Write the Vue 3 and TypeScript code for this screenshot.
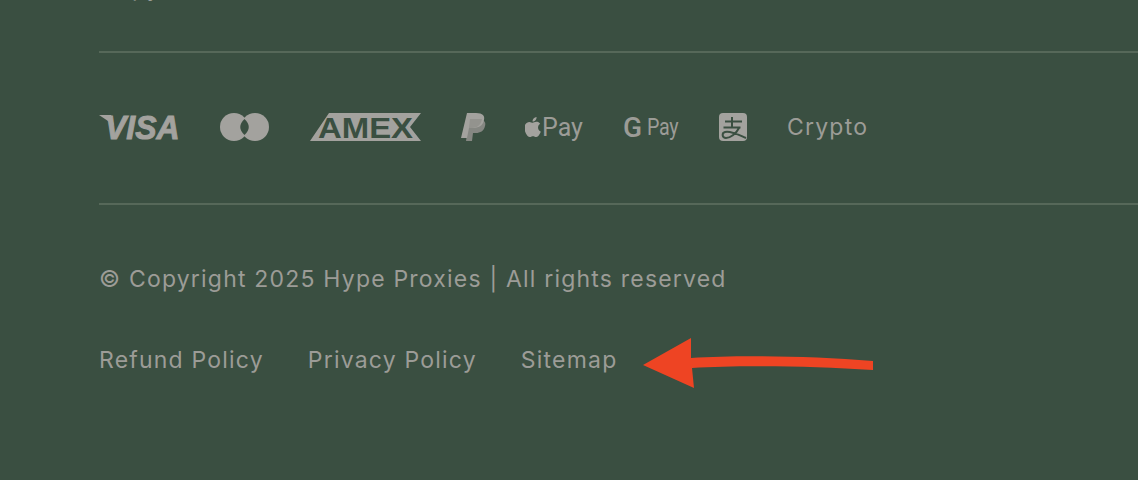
<script setup lang="ts">
const links: string[] = ['Refund Policy', 'Privacy Policy', 'Sitemap']
</script>

<template>
  <footer class="footer">
    <div class="clipped"><span>Copy</span></div>
    <hr class="rule first" />
    <div class="pay">
      <svg class="visa" width="86" height="44" viewBox="0 0 86 44">
        <path class="m" d="M0 10h12l3 10z" />
        <text class="visa-text" x="6" y="34" textLength="74.500" lengthAdjust="spacingAndGlyphs">VISA</text>
      </svg>
      <svg width="49" height="28" viewBox="0 0 49 28">
        <circle class="m" cx="14" cy="14" r="14" />
        <circle class="m" cx="35" cy="14" r="14" />
        <path class="bgfill" d="M24.500 6Q16 14 24.500 22Q33 14 24.500 6z" />
      </svg>
      <svg class="amex" width="111" height="44" viewBox="0 0 111 44">
        <path class="m" d="M19 8h92l-11 14 11 14H0z" />
        <text class="amex-text" x="8" y="32.500" textLength="95" lengthAdjust="spacingAndGlyphs">AMEX</text>
      </svg>
      <svg width="25" height="28" viewBox="0 0 25 28">
        <path class="m2" d="M8 7h11c5 0 6 3 5 6-1 5-5 7-9 7h-3l-1 8H5z" />
        <path class="m" d="M6 0h9c7 0 9 3 8 7-1 6-6 8-11 8H8l-2 10H0z" />
        <path class="m3" d="M9 6h12c-1 6-5 9-10 9H8z" />
      </svg>
      <div class="wallet apple">
        <svg width="16" height="20" viewBox="3 0 19 24">
          <path class="m" d="M12.152 6.896c-.948 0-2.415-1.078-3.960-1.040-2.040.027-3.910 1.183-4.961 3.014-2.117 3.675-.546 9.103 1.519 12.090 1.013 1.454 2.208 3.090 3.792 3.039 1.520-.065 2.090-.987 3.935-.987 1.831 0 2.350.987 3.960.948 1.637-.026 2.676-1.480 3.676-2.948 1.156-1.688 1.636-3.325 1.662-3.415-.039-.013-3.182-1.221-3.220-4.857-.026-3.040 2.480-4.494 2.597-4.559-1.429-2.090-3.623-2.324-4.390-2.376-2-.156-3.675 1.090-4.610 1.090zM15.530 3.830c.843-1.012 1.400-2.427 1.245-3.830-1.207.052-2.662.805-3.532 1.818-.780.896-1.454 2.338-1.273 3.714 1.338.104 2.715-.688 3.559-1.701" />
        </svg>
        <span>Pay</span>
      </div>
      <div class="wallet google">
        <b>G</b>
        <span>Pay</span>
      </div>
      <svg width="28" height="28" viewBox="0 0 28 28">
        <rect class="m" width="28" height="28" rx="4" />
        <path class="glyph" d="M6 8.500h17M13 4v10.500M4.500 14.500h17M20 15C17 21 11 25 7 25C3 25 2.500 20 6 19C12 17.500 20 22 27 25" />
      </svg>
      <span class="crypto">Crypto</span>
    </div>
    <hr class="rule" />
    <p class="copy">© Copyright 2025 Hype Proxies | All rights reserved</p>
    <nav class="links">
      <a v-for="link in links" :key="link">{{ link }}</a>
    </nav>
    <svg class="arrow" width="240" height="60" viewBox="0 0 240 60">
      <path d="M3 27L51 0L51 20C100 17 170 18 233 23L233 32C170 28 100 27 52 30L54 50z" />
    </svg>
  </footer>
</template>

<style scoped>
.footer {
  position: relative;
  box-sizing: border-box;
  width: 1138px;
  height: 480px;
  padding-left: 99px;
  overflow: hidden;
  background: #3a4f41;
  color: #9c9c97;
  font-family: Inter, "Liberation Sans", sans-serif;
  font-size: 23px;
  letter-spacing: 1.2px;
}
.clipped {
  display: flex;
  align-items: flex-end;
  height: 2px;
  margin-bottom: 49px;
  overflow: hidden;
}
.clipped span {
  flex: none;
  height: 27px;
  line-height: 27px;
  color: #b0b0ab;
}
.rule {
  height: 2px;
  margin: 0;
  border: 0;
  background: #566859;
}
.pay {
  box-sizing: border-box;
  display: flex;
  align-items: center;
  gap: 40px;
  height: 150px;
  padding-bottom: 2px;
}
.pay svg {
  flex: none;
  display: block;
}
.visa {
  margin-right: -5px;
}
.amex {
  margin-left: 1px;
}
.m {
  fill: #a3a29e;
}
.m2 {
  fill: #858782;
}
.m3 {
  fill: #93938e;
}
.bgfill {
  fill: #3a4f41;
}
.visa-text {
  fill: #a3a29e;
  stroke: #a3a29e;
  stroke-width: 1px;
  font: italic 700 33px "Liberation Sans", sans-serif;
  letter-spacing: 0;
}
.amex-text {
  fill: #3a4f41;
  font: 700 29px "Liberation Sans", sans-serif;
  letter-spacing: 0;
}
.glyph {
  fill: none;
  stroke: #3a4f41;
  stroke-width: 2;
}
.wallet {
  display: flex;
  align-items: center;
  flex: none;
  font-family: Roboto, sans-serif;
  font-size: 25px;
  letter-spacing: 0;
}
.apple {
  width: 59px;
  gap: 1px;
  margin-left: -2px;
}
.apple svg {
  margin-left: 1px;
}
.google {
  width: 56px;
  gap: 5px;
}
.google span {
  font-size: 24px;
  letter-spacing: -0.4px;
  transform: scaleX(0.82);
  transform-origin: left center;
}
.google b {
  font-size: 28px;
  font-weight: 500;
}
.crypto {
  flex: none;
}
.copy {
  margin: 58px 0 0;
  height: 32px;
  line-height: 32px;
}
.links {
  display: flex;
  gap: 44px;
  margin-top: 49px;
  line-height: 32px;
}
.arrow {
  position: absolute;
  left: 640px;
  top: 338px;
}
.arrow path {
  fill: #ee4423;
}
</style>
